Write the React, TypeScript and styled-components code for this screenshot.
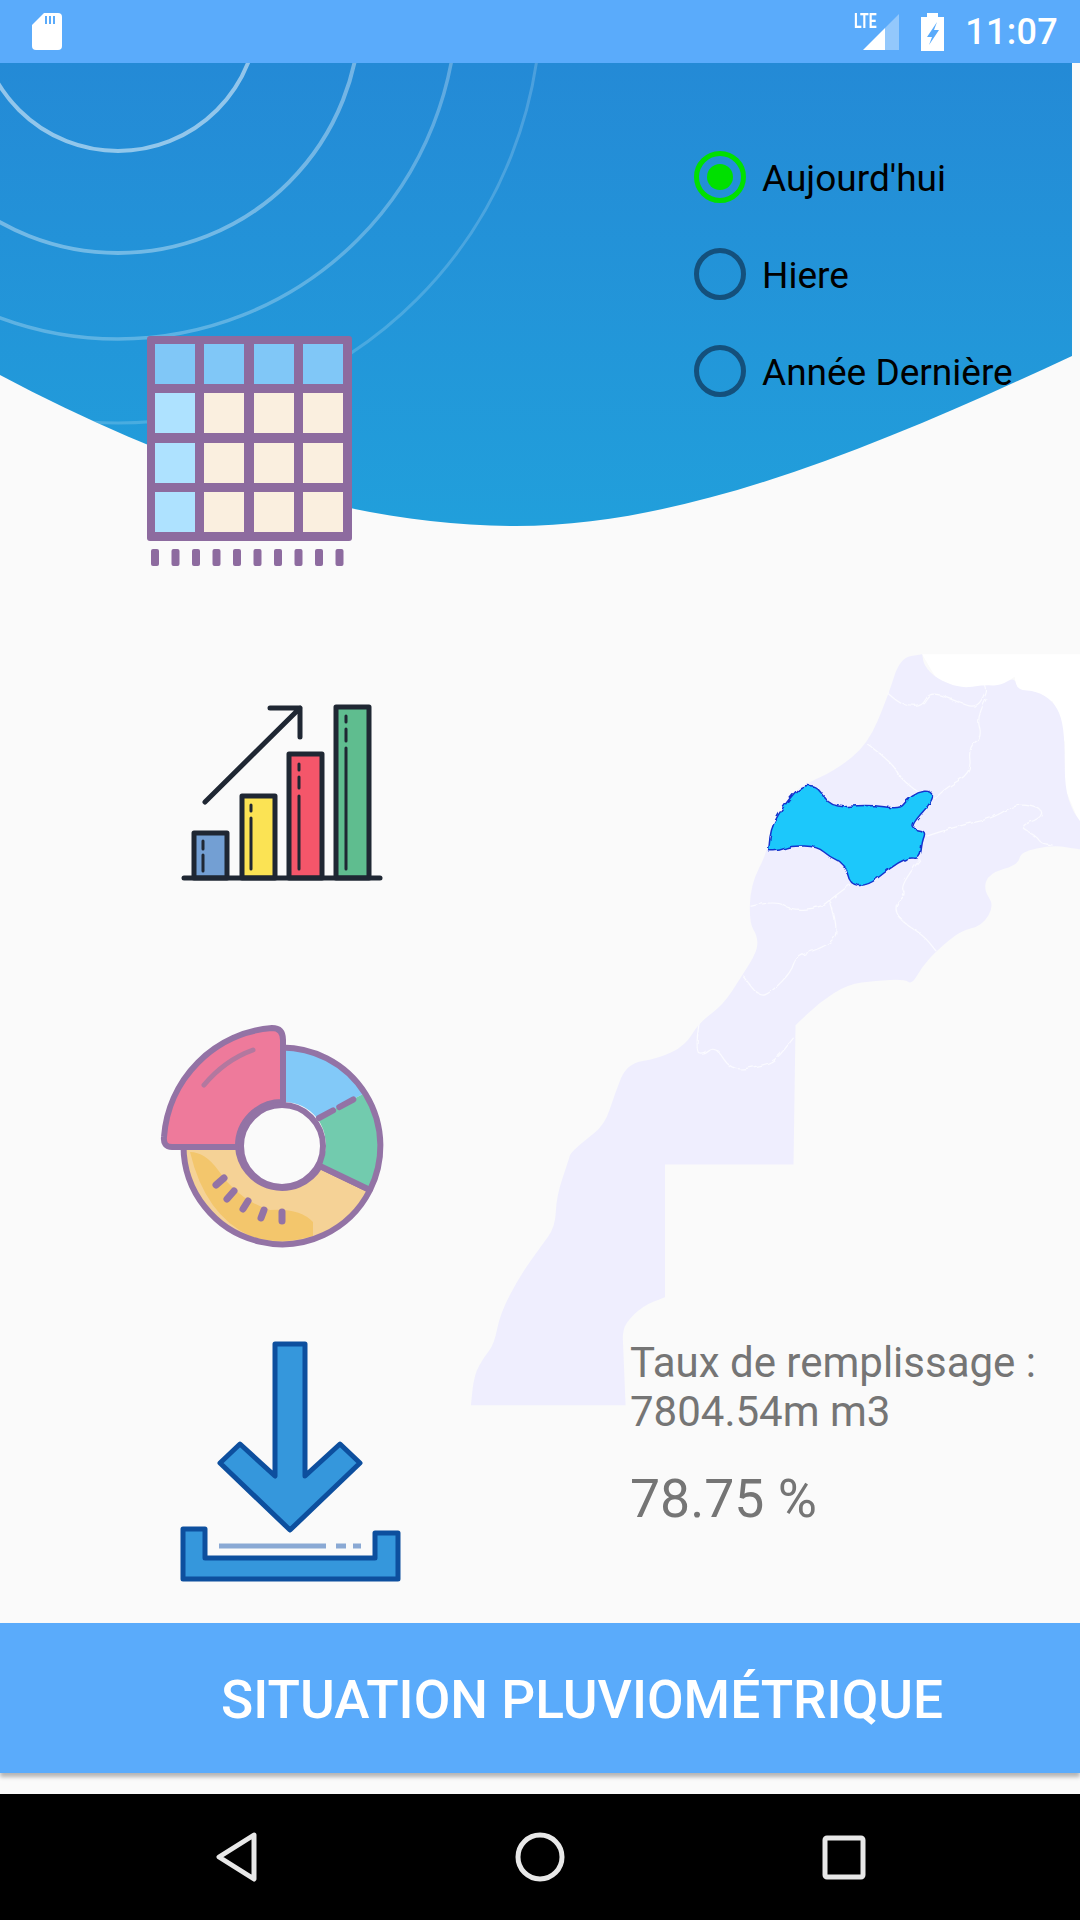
import styled, {createGlobalStyle} from "styled-components";

const GlobalStyle = createGlobalStyle`
  html, body {
    margin: 0;
    padding: 0;
    background: #fafafa;
  }
`;

const Screen = styled.div`
  width: 1080px;
  height: 1920px;
  display: flex;
  flex-direction: column;
  overflow: hidden;
  background: #fafafa;
  font-family: Roboto, "Liberation Sans", sans-serif;
`;

const StatusBar = styled.header`
  height: 63px;
  flex: none;
  background: #5aabfb;
  display: flex;
  align-items: center;
  justify-content: space-between;
  padding: 0 22px 0 32px;
  position: relative;
  z-index: 2;
`;
const StatusRight = styled.div`
  display: flex;
  align-items: center;
`;
const LteLabel = styled.span`
  color: #fff;
  font-size: 20px;
  font-weight: 700;
  line-height: 20px;
  margin: -21px -14px 0 0;
  width: 23px;
  white-space: nowrap;
  transform: scaleX(0.7);
  transform-origin: left center;
`;
const Clock = styled.span`
  color: #fff;
  font-size: 36px;
  font-weight: 500;
  margin-left: 21px;
  letter-spacing: 0.3px;
`;
const StatusIcon = styled.svg`
  display: block;
  margin-left: ${props => props.$gap ?? 0}px;
`;

const Main = styled.main`
  flex: 1;
  position: relative;
  display: flex;
`;
const Wave = styled.svg`
  position: absolute;
  left: 0;
  top: 0;
`;
const MapShape = styled.svg`
  position: absolute;
  left: 450px;
  top: 577px;
`;

const IconColumn = styled.div`
  position: relative;
  width: 630px;
  flex: none;
  display: flex;
  flex-direction: column;
`;
const Pictogram = styled.svg`
  display: block;
  flex: none;
  margin-left: ${props => props.$left}px;
  margin-top: ${props => props.$top}px;
`;

const InfoColumn = styled.div`
  position: relative;
  flex: 1;
  display: flex;
  flex-direction: column;
`;
const RadioList = styled.ul`
  list-style: none;
  margin: 65px 0 0 64px;
  padding: 0;
`;
const RadioRow = styled.li`
  height: 97px;
  display: flex;
  align-items: center;
  gap: 16px;
`;
const RadioMark = styled.span`
  width: 52px;
  height: 52px;
  box-sizing: border-box;
  border-radius: 50%;
  border: 5px solid ${props => props.$checked ? "#00e000" : "#14507c"};
  display: flex;
  align-items: center;
  justify-content: center;
  flex: none;
  &::after {
    content: "";
    width: 26px;
    height: 26px;
    border-radius: 50%;
    background: ${props => props.$checked ? "#00e000" : "transparent"};
  }
`;
const RadioText = styled.span`
  color: #000;
  font-size: 37px;
  line-height: 42px;
  padding-top: 5px;
`;
const Stats = styled.div`
  margin-top: 919px;
  color: #757575;
`;
const FillLabel = styled.div`
  font-size: 42px;
  line-height: 49px;
`;
const FillValue = styled.div`
  font-size: 53.5px;
  line-height: 64px;
  margin-top: 31px;
`;

const ActionBar = styled.div`
  height: 150px;
  box-sizing: border-box;
  flex: none;
  background: #5aabfb;
  box-shadow: 0 4px 4px rgba(0, 0, 0, 0.28);
  margin-bottom: 21px;
  display: flex;
  align-items: center;
  padding: 4px 0 0 221px;
  color: #fff;
  font-size: 53.2px;
  font-weight: 500;
  position: relative;
`;

const NavBar = styled.nav`
  height: 126px;
  flex: none;
  background: #000;
`;
const NavIcons = styled.svg`
  display: block;
`;

const radioOptions = [
  {label: "Aujourd'hui", checked: true},
  {label: "Hiere", checked: false},
  {label: "Année Dernière", checked: false},
];

const waveEdge = "M0 312 C175 405 350 463 516 463 C690 463 885 380 1072 293";

const rings = [
  {cy: -52, r: 140, width: 4, opacity: 0.5},
  {cy: -52, r: 242, width: 4, opacity: 0.36},
  {cy: -63, r: 339, width: 3.5, opacity: 0.27},
  {cy: -63, r: 423, width: 3, opacity: 0.18},
];

// a point written twice stays a sharp corner, the others get rounded off
const smooth = (points: string, closed = false) => {
    const pts = points.trim().split(/\s+/).map(p => p.split(",").map(Number));
    const mid = (a: number[], b: number[]) => `${(a[0] + b[0]) / 2} ${(a[1] + b[1]) / 2}`;
    if (closed) {
        let d = `M${mid(pts[pts.length - 1], pts[0])}`;
        pts.forEach((p, i) => {
            d += ` Q${p[0]} ${p[1]} ${mid(p, pts[(i + 1) % pts.length])}`;
        });
        return d + " Z";
    }
    let d = `M${pts[0][0]} ${pts[0][1]}`;
    pts.slice(1, -1).forEach((p, i) => {
        d += ` Q${p[0]} ${p[1]} ${mid(p, pts[i + 2])}`;
    });
    const last = pts[pts.length - 1];
    return d + ` L${last[0]} ${last[1]}`;
};

const mapOutline = "1120,35 1175,28 1175,28 1180,50 1210,75 1270,95 1330,88 1370,90 1405,72 1412,98 1460,100 1500,120 1522,150 1530,200 1530,290 1550,335 1568,355 1568,355 1568,410 1568,410 1500,402 1420,415 1415,440 1340,458 1328,490 1355,520 1325,560 1270,570 1210,610 1175,640 1150,675 1130,665 1060,668 990,675 920,710 860,755 860,755 855,1028 855,1028 535,1028 535,1028 535,1288 535,1288 480,1305 435,1340 430,1365 430,1365 437,1500 437,1500 52,1500 52,1500 60,1440 85,1405 110,1380 125,1320 175,1245 225,1190 262,1150 265,1090 295,1020 300,1005 330,985 385,950 410,890 440,830 520,820 585,795 620,750 680,715 725,660 765,610 765,580 745,555 748,480 790,415 800,360 860,295 890,280 960,255 1040,205 1090,110";
const mapBorders = [
  "1090,105 1115,122 1140,130 1175,130 1195,100 1260,120 1310,135 1335,100 1330,88",
  "1335,115 1310,150 1325,190 1290,210 1298,260 1235,290 1205,312",
  "1040,205 1100,240 1120,270 1165,298",
  "1185,385 1260,365 1350,350 1410,320 1475,330 1470,350 1415,365 1460,385 1470,398 1500,402",
  "748,522 810,510 850,530 920,525 945,510 995,480",
  "945,510 970,570 940,600 860,620 850,650 800,690 770,700 730,660",
  "1170,430 1120,480 1135,500 1105,520 1120,550 1180,580 1210,610",
  "620,750 610,805 630,815 660,795 700,845 770,835 810,825 855,780",
];
const mapRegion = "793,413 793,413 800,360 862,292 890,284 915,288 950,330 1040,322 1120,332 1135,315 1165,298 1195,295 1205,312 1150,360 1155,372 1185,375 1175,395 1170,430 1140,425 1090,450 1040,482 995,480 985,440 945,425 915,405 850,403 820,413";

const chartBars = [
  {x: 194, top: 833, fill: "#739fd3", marks: [[203, 841, 849], [203, 855, 871]]},
  {x: 242, top: 796, fill: "#fbe354", marks: [[251, 805, 811], [251, 818, 869]]},
  {x: 289, top: 754, fill: "#f4566a", marks: [[299, 764, 770], [299, 777, 788], [299, 796, 869]]},
  {x: 336, top: 707, fill: "#5fbd8f", marks: [[346, 716, 722], [346, 729, 741], [346, 748, 869]]},
];

function TableIcon () {
    const cols = [155, 204, 254, 303];
    const rows = [344, 393, 443, 492];
    return (
        <Pictogram $left={147} $top={273} width="205" height="230" viewBox="147 336 205 230">
            <rect x="147" y="336" width="205" height="205" rx="3" fill="#8d6b9f"/>
            {rows.map((y, r) => cols.map((x, c) => (
                <rect
                    key={`${r}-${c}`}
                    x={x}
                    y={y}
                    width="40"
                    height="40"
                    fill={r === 0 ? "#80c7f7" : c === 0 ? "#aee2ff" : "#faefdf"}
                />
            )))}
            {Array.from({length: 10}, (_, i) => (
                <rect key={i} x={151 + i * 20.5} y="549" width="8" height="17" rx="2" fill="#8d6b9f"/>
            ))}
        </Pictogram>
    );
}

function ChartIcon () {
    return (
        <Pictogram $left={180} $top={138} width="204" height="178" viewBox="180 704 204 178">
            {chartBars.map(bar => (
                <g key={bar.x}>
                    <rect x={bar.x} y={bar.top} width="33" height={878 - bar.top} fill={bar.fill} stroke="#1f2733" strokeWidth="5" strokeLinejoin="round"/>
                    {bar.marks.map(([x, from, to]) => (
                        <line key={from} x1={x} x2={x} y1={from} y2={Math.min(to, 875)} stroke="#1f2733" strokeWidth="3" strokeLinecap="round"/>
                    ))}
                </g>
            ))}
            <path d="M184 878 H380" stroke="#1f2733" strokeWidth="5" strokeLinecap="round"/>
            <path d="M205 802 L300 708 M270 708 H300 V737" fill="none" stroke="#1f2733" strokeWidth="5" strokeLinecap="round" strokeLinejoin="round"/>
        </Pictogram>
    );
}

function PieIcon () {
    const stroke = "#9373a5";
    const ticks = [[216, 1185, 224, 1178], [227, 1199, 234, 1191], [243, 1209, 248, 1201], [261, 1218, 264, 1210], [282, 1221, 282, 1212]];
    const yellow = "M183.5 1146 A98.5 98.5 0 0 0 370 1190 L320 1166 A44 44 0 0 1 238 1146 Z";
    return (
        <Pictogram $left={160} $top={142} width="226" height="228" viewBox="160 1024 226 228">
            <path d={yellow} fill="#f5d296"/>
            <path d="M190 1152 Q205 1152 218 1170 Q238 1200 270 1210 Q300 1208 313 1222 L313 1236 Q280 1246 250 1236 Q205 1215 190 1152Z" fill="#f3c66c"/>
            <path d={yellow} fill="none" stroke={stroke} strokeWidth="6" strokeLinejoin="round"/>
            <path d="M282 1047.5 A98.5 98.5 0 0 1 365 1093 L317 1118 A44 44 0 0 0 282 1102 Z" fill="#82c9f8"/>
            <path d="M365 1093 A98.5 98.5 0 0 1 370 1190 L320 1166 A44 44 0 0 0 317 1118 Z" fill="#72cbae"/>
            <path d="M282 1047.5 A98.5 98.5 0 0 1 370 1190" fill="none" stroke={stroke} strokeWidth="6"/>
            <path d="M320 1166 L370 1190" stroke={stroke} strokeWidth="6"/>
            <path d="M319 1118 L358 1097" stroke={stroke} strokeWidth="6" strokeDasharray="16 7" strokeLinecap="round"/>
            <path d="M283 1102 V1040 Q283 1028 272 1028 A118 118 0 0 0 164 1137 Q163 1147 172 1147 H238 A44 44 0 0 1 283 1102 Z" fill="#ee7a9b" stroke={stroke} strokeWidth="6" strokeLinejoin="round"/>
            <path d="M204 1085 Q225 1060 253 1050" fill="none" stroke="#b3789f" strokeWidth="5" strokeLinecap="round"/>
            <circle cx="282" cy="1146" r="41" fill="#fafafa" stroke={stroke} strokeWidth="6"/>
            {ticks.map(([x1, y1, x2, y2]) => (
                <line key={x1} x1={x1} y1={y1} x2={x2} y2={y2} stroke={stroke} strokeWidth="7" strokeLinecap="round"/>
            ))}
        </Pictogram>
    );
}

function DownloadIcon () {
    const stroke = "#0d4f9e";
    return (
        <Pictogram $left={178} $top={88} width="225" height="243" viewBox="178 1340 225 243">
            <path d="M275 1344 H305 V1476 L340 1444 L360 1463 L290 1530 L220 1463 L240 1444 L275 1476 Z" fill="#3597dc" stroke={stroke} strokeWidth="5" strokeLinejoin="round"/>
            <path d="M183 1529 H205 V1558 H375 V1533 H398 V1579 H183 Z" fill="#3597dc" stroke={stroke} strokeWidth="5" strokeLinejoin="round"/>
            <path d="M219 1546 H326 M336 1546 H346 M353 1546 H361" stroke="#8aa9d4" strokeWidth="5"/>
        </Pictogram>
    );
}

function App () {
    return (
        <Screen>
            <GlobalStyle/>
            <StatusBar>
                <StatusIcon width="30" height="37" viewBox="32 13 30 37">
                    <path d="M44 13 H58 Q62 13 62 17 V46 Q62 50 58 50 H36 Q32 50 32 46 V25 Z" fill="#fff"/>
                    <path d="M46 16 V24 M50 16 V24 M54 16 V24" stroke="#5aabfb" strokeWidth="2"/>
                </StatusIcon>
                <StatusRight>
                    <LteLabel>LTE</LteLabel>
                    <StatusIcon width="36" height="36" viewBox="864 13 36 36">
                        <polygon points="864,49 886,27 886,49" fill="#fff"/>
                        <polygon points="886,27 900,13 900,49 886,49" fill="#fff" fillOpacity="0.35"/>
                    </StatusIcon>
                    <StatusIcon $gap={22} width="23" height="38" viewBox="922 12 23 38">
                        <path d="M928 12 H939 V16 H945 V50 H922 V16 H928 Z" fill="#fff"/>
                        <polygon points="938,21 928,36 933,36 930,44 940,29 935,29" fill="#5aabfb"/>
                    </StatusIcon>
                    <Clock>11:07</Clock>
                </StatusRight>
            </StatusBar>
            <Main>
                <Wave width="1072" height="470" viewBox="0 0 1072 470">
                    <defs>
                        <linearGradient id="waveFill" x1="0" y1="0" x2="0" y2="1">
                            <stop offset="0" stopColor="#248ad6"/>
                            <stop offset="1" stopColor="#219fdb"/>
                        </linearGradient>
                        <clipPath id="waveBody">
                            <path d={`${waveEdge} V0 H0 Z`}/>
                        </clipPath>
                    </defs>
                    <path d={`${waveEdge} V0 H0 Z`} fill="url(#waveFill)"/>
                    <g clipPath="url(#waveBody)">
                        {rings.map(ring => (
                            <circle key={ring.r} cx="118" cy={ring.cy} r={ring.r} fill="none" stroke="#fff" strokeWidth={ring.width} strokeOpacity={ring.opacity}/>
                        ))}
                    </g>
                </Wave>
                <MapShape width="630" height="800" viewBox="0 0 1568 1568" preserveAspectRatio="none">
                    <defs>
                        <filter id="rough" x="-5%" y="-5%" width="110%" height="110%">
                            <feTurbulence type="fractalNoise" baseFrequency="0.05" numOctaves="2" seed="4"/>
                            <feDisplacementMap in="SourceGraphic" scale="9"/>
                        </filter>
                    </defs>
                    <polygon points="1175,28 1568,28 1568,360 1530,290 1530,200 1500,120 1412,98 1405,72 1370,90 1270,95 1210,75" fill="#fff"/>
                    <path d={smooth(mapOutline, true)} fill="#efeefe"/>
                    <g filter="url(#rough)">
                        {mapBorders.map(points => (
                            <path key={points} d={smooth(points)} fill="none" stroke="#fbfbff" strokeWidth="1.2" vectorEffect="non-scaling-stroke"/>
                        ))}
                        <path d={smooth(mapRegion, true)} fill="#1ac8fb" stroke="#1433cc" strokeWidth="1.5" strokeLinejoin="round" vectorEffect="non-scaling-stroke"/>
                    </g>
                </MapShape>
                <IconColumn>
                    <TableIcon/>
                    <ChartIcon/>
                    <PieIcon/>
                    <DownloadIcon/>
                </IconColumn>
                <InfoColumn>
                    <RadioList>
                        {radioOptions.map(option => (
                            <RadioRow key={option.label}>
                                <RadioMark $checked={option.checked}/>
                                <RadioText>{option.label}</RadioText>
                            </RadioRow>
                        ))}
                    </RadioList>
                    <Stats>
                        <FillLabel>Taux de remplissage :<br/>7804.54m m3</FillLabel>
                        <FillValue>78.75 %</FillValue>
                    </Stats>
                </InfoColumn>
            </Main>
            <ActionBar>SITUATION PLUVIOMÉTRIQUE</ActionBar>
            <NavBar>
                <NavIcons width="1080" height="126" viewBox="0 1794 1080 126">
                    <path d="M254 1835 L219 1857 L254 1879 Z" fill="none" stroke="#e8e8e8" strokeWidth="5" strokeLinejoin="round"/>
                    <circle cx="540" cy="1857" r="22" fill="none" stroke="#e8e8e8" strokeWidth="5"/>
                    <rect x="825" y="1838" width="38" height="39" rx="2" fill="none" stroke="#e8e8e8" strokeWidth="5"/>
                </NavIcons>
            </NavBar>
        </Screen>
    );
}

export default App;
